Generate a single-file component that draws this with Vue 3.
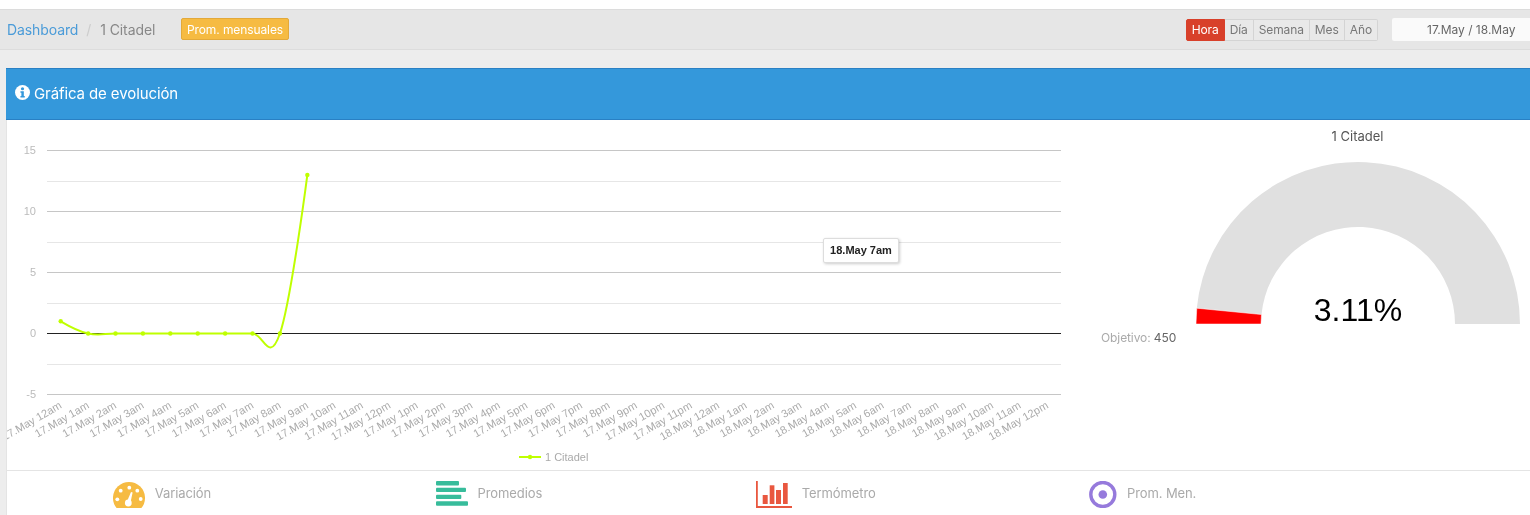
<script setup>
const tickX = (i) => 60.7 + i * 27.405
const yFor = (v) => 333.5 - v * 12.2

const hours = ['12am','1am','2am','3am','4am','5am','6am','7am','8am','9am','10am','11am','12pm','1pm','2pm','3pm','4pm','5pm','6pm','7pm','8pm','9pm','10pm','11pm']
const names = [
  ...hours.map((h) => `17.May ${h}`),
  ...hours.slice(0, 13).map((h) => `18.May ${h}`)
]
const xLabels = names.map((text, i) => ({ text, x: tickX(i) + 1.8, y: 407.5 }))

const majors = [{ v: 15, y: 150 }, { v: 10, y: 211 }, { v: 5, y: 272 }, { v: -5, y: 394 }]
const minors = [181, 242, 303, 364]

const pts = [1, 0, 0, 0, 0, 0, 0, 0, 0, 13].map((v, i) => ({ x: tickX(i), y: yFor(v) }))

function conts(i) {
  const p = pts[i], a = pts[i - 1], b = pts[i + 1]
  if (!a || !b) return { lx: p.x, ly: p.y, rx: p.x, ry: p.y }
  const s = 1.5, d = 2.5
  const lx = (s * p.x + a.x) / d
  let ly = (s * p.y + a.y) / d
  const rx = (s * p.x + b.x) / d
  let ry = (s * p.y + b.y) / d
  const c = ((ry - ly) * (rx - p.x)) / (rx - lx) + p.y - ry
  ly += c
  ry += c
  return { lx, ly, rx, ry }
}
let linePath = `M${pts[0].x} ${pts[0].y}`
for (let i = 1; i < pts.length; i++) {
  const a = conts(i - 1), b = conts(i)
  linePath += ` C${a.rx} ${a.ry} ${b.lx} ${b.ly} ${pts[i].x} ${pts[i].y}`
}

const cx = 1358, cy = 324, R = 162, r = 97
const ang = (3.11 / 100) * Math.PI
const gaugeRed = `M${cx - R} ${cy} L${cx - R * Math.cos(ang)} ${cy - R * Math.sin(ang)} L${cx - r * Math.cos(ang)} ${cy - r * Math.sin(ang)} L${cx - r} ${cy} Z`
const gaugeGrey = `M${cx - R * Math.cos(ang)} ${cy - R * Math.sin(ang)} A${R} ${R} 0 0 1 ${cx + R} ${cy} L${cx + r} ${cy} A${r} ${r} 0 0 0 ${cx - r * Math.cos(ang)} ${cy - r * Math.sin(ang)} Z`

const ranges = ['Día', 'Semana', 'Mes', 'Año']
</script>

<template>
  <div class="page">
    <header class="toolbar">
      <nav class="crumbs">
        <a class="crumb-link">Dashboard</a>
        <span class="crumb-sep">/</span>
        <span class="crumb-current">1 Citadel</span>
      </nav>
      <button class="badge-btn">Prom. mensuales</button>
      <div class="range-group">
        <button class="range-btn active">Hora</button>
        <button v-for="r in ranges" :key="r" class="range-btn">{{ r }}</button>
      </div>
      <div class="date-box">17.May / 18.May</div>
    </header>

    <section class="panel">
      <h2 class="panel-head">
        <svg class="info" viewBox="0 0 16 16" width="15" height="15">
          <circle cx="8" cy="8" r="8" fill="#fff" />
          <circle cx="8" cy="4" r="1.7" fill="#3498db" />
          <path d="M5.8 6.6h3.6v5.2h1v1.6H5.8v-1.6h1V8.2h-1z" fill="#3498db" />
        </svg>
        <span class="panel-title">Gráfica de evolución</span>
      </h2>

      <div class="panel-body">
        <div class="chart">
          <svg class="chart-svg" viewBox="7 120 1068 350" width="1068" height="350">
            <line v-for="y in minors" :key="y" x1="47" x2="1061" :y1="y + 0.5" :y2="y + 0.5" stroke="#e6e6e6" />
            <line v-for="m in majors" :key="m.v" x1="47" x2="1061" :y1="m.y + 0.5" :y2="m.y + 0.5" stroke="#c6c6c6" />
            <line x1="47" x2="1061" y1="333.5" y2="333.5" stroke="#222" />
            <g class="ylabels">
              <text v-for="m in majors" :key="m.v" x="36" :y="m.y + 4">{{ m.v }}</text>
              <text x="36" y="337">0</text>
            </g>
            <g class="xlabels">
              <text
                v-for="l in xLabels"
                :key="l.text"
                :x="l.x"
                :y="l.y"
                :transform="`rotate(-30 ${l.x} ${l.y})`"
              >{{ l.text }}</text>
            </g>
            <path :d="linePath" fill="none" stroke="#bfff00" stroke-width="2" />
            <circle v-for="(p, i) in pts" :key="i" :cx="p.x" :cy="p.y" r="2.2" fill="#bfff00" />
            <line x1="519" x2="541" y1="457" y2="457" stroke="#bfff00" stroke-width="2" />
            <circle cx="530" cy="457" r="2.2" fill="#bfff00" />
            <text class="legend" x="545" y="461">1 Citadel</text>
          </svg>
          <div class="tooltip">18.May 7am</div>
        </div>

        <svg class="gauge" viewBox="1075 120 455 350" width="455" height="350">
          <text class="gauge-title" x="1357.5" y="141">1 Citadel</text>
          <path :d="gaugeGrey" fill="#e0e0e0" />
          <path :d="gaugeRed" fill="#ff0000" stroke="#fff" stroke-width="0.5" />
          <text class="gauge-value" x="1358" y="321">3.11%</text>
          <text class="gauge-goal" x="1101" y="342">Objetivo: <tspan class="gauge-num">450</tspan></text>
        </svg>
      </div>

      <footer class="stats">
        <div class="stat">
          <svg class="stat-icon" viewBox="113 481 32 27" width="32" height="27">
            <path d="M116.6 508A16 16 0 1 1 141.4 508Z" fill="#f6bb42" />
            <g fill="#fff">
              <circle cx="117.3" cy="499.3" r="1.9" />
              <circle cx="120.7" cy="490.7" r="1.9" />
              <circle cx="129.3" cy="487.7" r="1.9" />
              <circle cx="137.3" cy="490.7" r="1.9" />
              <circle cx="140.7" cy="499" r="1.9" />
              <circle cx="128.3" cy="503" r="3.4" />
              <path d="M131 492l1.6.5-2 9.5-3.4-1z" />
            </g>
          </svg>
          <span>Variación</span>
        </div>
        <div class="stat">
          <svg class="stat-icon" viewBox="435 481 32 25" width="32" height="25">
            <g fill="#37bc9b">
              <rect x="435" y="481" width="23" height="4.4" rx="1" />
              <rect x="435" y="487.7" width="30" height="4.4" rx="1" />
              <rect x="435" y="494.7" width="25.3" height="4.4" rx="1" />
              <rect x="435" y="501.3" width="32" height="4.4" rx="1" />
            </g>
          </svg>
          <span>Promedios</span>
        </div>
        <div class="stat">
          <svg class="stat-icon" viewBox="755 481 36 27" width="36" height="27">
            <g fill="#e9573f">
              <rect x="755" y="481" width="1.8" height="27" />
              <rect x="755" y="506" width="36" height="2" />
              <rect x="761.7" y="495" width="5" height="9" />
              <rect x="768.7" y="485.3" width="4.7" height="18.7" />
              <rect x="775" y="490" width="5" height="14" />
              <rect x="782" y="483" width="4.7" height="21" />
            </g>
          </svg>
          <span>Termómetro</span>
        </div>
        <div class="stat">
          <svg class="stat-icon" viewBox="1089 481 28 27" width="28" height="27">
            <circle cx="1102.8" cy="494.5" r="12" fill="none" stroke="#967adc" stroke-width="3.4" />
            <circle cx="1102.8" cy="494.5" r="4.3" fill="#967adc" />
          </svg>
          <span>Prom. Men.</span>
        </div>
      </footer>
    </section>
  </div>
</template>

<style>
html, body { margin: 0; overflow: hidden; background: #ededed; }
</style>

<style scoped>
.page {
  width: 1530px;
  height: 515px;
  overflow: hidden;
  padding-top: 9px;
  box-sizing: border-box;
  background: linear-gradient(#fff 9px, #ededed 9px);
  font-family: Inter, "Liberation Sans", sans-serif;
  will-change: transform;
}
.toolbar {
  display: flex;
  align-items: center;
  height: 39px;
  padding-left: 7px;
  background: #e6e6e6;
  border-top: 1px solid #dcdcdc;
  border-bottom: 1px solid #dcdcdc;
  margin-bottom: 18px;
}
.crumbs {
  display: flex;
  align-items: center;
  width: 149px;
  font-size: 14px;
  letter-spacing: -0.1px;
}
.crumb-link { color: #4a9bd8; }
.crumb-sep { color: #ccc; margin: 0 9px 0 8px; }
.crumb-current { color: #888; }
.badge-btn {
  margin: -1px 0 0 25px;
  height: 22px;
  width: 108px;
  padding: 0;
  background: #f6bb42;
  border: 1px solid #e3a93a;
  border-radius: 2px;
  color: #fff;
  font: 12px Inter, sans-serif;
  letter-spacing: -0.1px;
}
.range-group {
  display: flex;
  margin-left: auto;
  margin-right: 14px;
  height: 22px;
}
.range-btn {
  padding: 0 5px;
  background: #e9e9e9;
  border: 1px solid #d4d4d4;
  border-left: 0;
  color: #777;
  font: 12px Inter, sans-serif;
  letter-spacing: -0.1px;
}
.range-btn.active {
  background: #d8402a;
  border: 1px solid #d8402a;
  border-radius: 2px 0 0 2px;
  color: #fff;
  padding: 0 5px;
}
.range-btn:last-child { border-radius: 0 2px 2px 0; }
.date-box {
  width: 138px;
  height: 23px;
  line-height: 23px;
  box-sizing: border-box;
  padding-left: 35px;
  background: #fafafa;
  border-radius: 2px 0 0 2px;
  color: #666;
  font-size: 12px;
}
.panel {
  margin-left: 6px;
  background: #fff;
  border-left: 1px solid #e4e4e4;
}
.panel-head {
  display: flex;
  align-items: center;
  gap: 4px;
  height: 50px;
  margin: 0 0 0 -1px;
  padding-left: 9px;
  background: #3498db;
  border-top: 1px solid #2980c4;
  border-bottom: 1px solid #2980c4;
  color: #fff;
  font-size: 15px;
  font-weight: 400;
  letter-spacing: -0.1px;
}
.panel-title { margin-top: -1px; }
.info { margin-top: -3px; }
.panel-body {
  display: flex;
  height: 350px;
}
.chart {
  position: relative;
  width: 1068px;
  flex: none;
}
.chart-svg, .gauge { display: block; flex: none; }
.ylabels text {
  font: 11px "Liberation Sans", sans-serif;
  fill: #bbb;
  text-anchor: end;
}
.xlabels text {
  font: 11px "Liberation Sans", sans-serif;
  fill: #aaa;
  text-anchor: end;
}
.legend {
  font: 11px "Liberation Sans", sans-serif;
  fill: #aaa;
}
.tooltip {
  position: absolute;
  left: 816px;
  top: 118px;
  width: 76px;
  height: 25px;
  box-sizing: border-box;
  background: #fff;
  border: 1px solid #ddd;
  border-radius: 2px;
  box-shadow: 1px 1px 3px rgba(0, 0, 0, 0.2);
  color: #222;
  font: bold 11px/23px "Liberation Sans", sans-serif;
  text-align: center;
}
.gauge-title {
  font: 400 13px Inter, sans-serif;
  fill: #555;
  text-anchor: middle;
}
.gauge-value {
  font: 32px "Liberation Sans", sans-serif;
  fill: #000;
  text-anchor: middle;
}
.gauge-goal {
  font: 12px Inter, sans-serif;
  fill: #aaa;
  letter-spacing: -0.1px;
}
.gauge-num { fill: #666; }
.stats {
  display: grid;
  grid-template-columns: repeat(4, 326.9px);
  height: 45px;
  margin-left: -8.5px;
  position: relative;
}
.stats::before {
  content: "";
  position: absolute;
  left: 8px;
  right: -300px;
  top: 0;
  border-top: 1px solid #e4e4e4;
}
.stat {
  display: flex;
  justify-content: center;
  align-items: flex-start;
  padding-top: 11px;
  gap: 10px;
  color: #aaa;
  font-size: 13px;
  letter-spacing: -0.1px;
  line-height: 24px;
}
.stat-icon { display: block; flex: none; }
</style>
